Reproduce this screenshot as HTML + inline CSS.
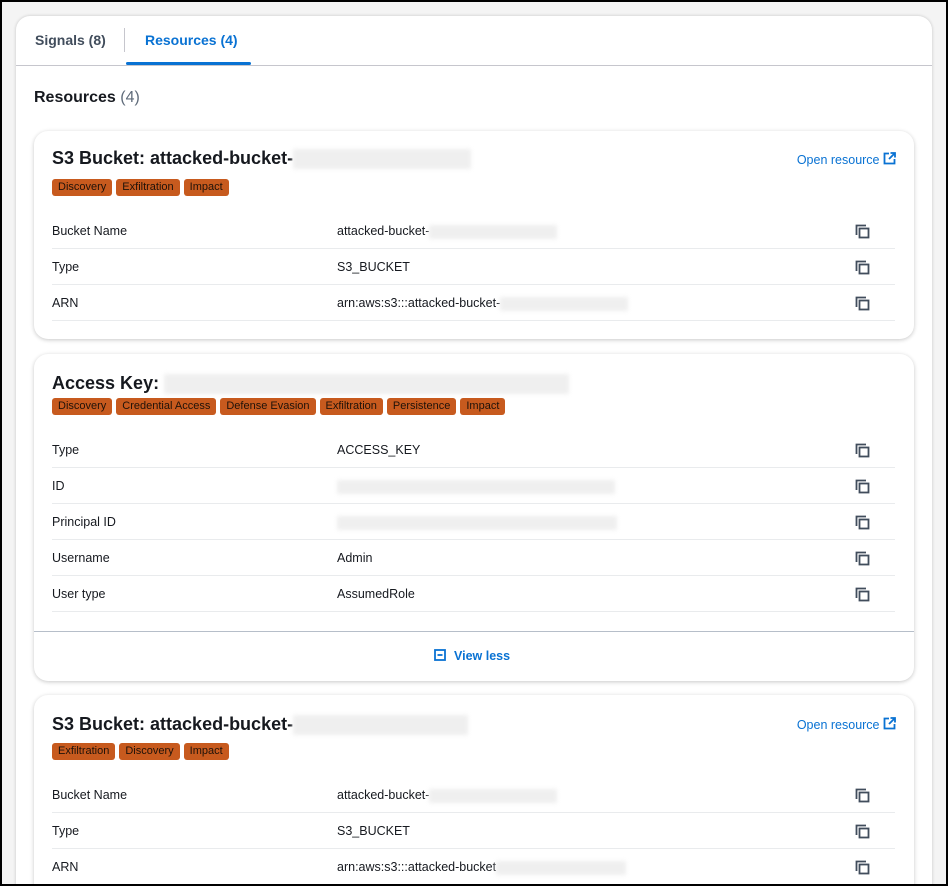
<!DOCTYPE html>
<html><head><meta charset="utf-8"><style>
*{box-sizing:border-box;margin:0;padding:0}
html,body{width:948px;height:886px;overflow:hidden;background:#f4f4f4;font-family:"Liberation Sans",sans-serif;color:#16191f;position:relative}
.frame{position:absolute;left:0;top:0;width:948px;height:886px;border:2px solid #000;}
.panel{position:absolute;left:16px;top:16px;width:916px;height:870px;overflow:hidden;background:#fff;border-radius:14px 14px 0 0;box-shadow:0 0 3px rgba(0,0,0,.2)}
.abs{position:absolute}
.tab{position:absolute;top:16px;font-size:14px;font-weight:bold}
.card{position:absolute;left:18px;width:880px;background:#fff;border-radius:14px;box-shadow:0 1px 4px rgba(0,0,0,.22)}
.title{position:absolute;left:18px;font-size:18px;font-weight:bold}
.tags{position:absolute;left:18px;display:flex;gap:4px}
.tag{background:#c75a1e;color:#1f1209;font-size:11px;height:17px;line-height:17px;padding:0 6px;border-radius:3px}
.row{position:absolute;left:18px;width:843px;height:36px;border-bottom:1px solid #e9ebed;font-size:12.5px}
.row .l{position:absolute;left:0;top:11px}
.row .v{position:absolute;left:285px;top:11px}
.row svg{position:absolute;left:803px;top:11px}
.blur{display:inline-block;background:#efefef;filter:blur(2px);vertical-align:middle;height:14px}
.open{position:absolute;right:18px;font-size:12.5px;color:#0972d3}
</style></head><body>
<div class="panel">
 <div class="tab" style="left:19px;color:#414d5c">Signals (8)</div>
 <div class="abs" style="left:108px;top:12px;width:1px;height:24px;background:#c6c6cd"></div>
 <div class="tab" style="left:129px;color:#0972d3">Resources (4)</div>
 <div class="abs" style="left:110px;top:46px;width:125px;height:3px;background:#0972d3;border-radius:2px"></div>
 <div class="abs" style="left:0;top:49px;width:916px;height:1px;background:#c6c6cd"></div>
 <div class="abs" style="left:18px;top:73px;font-size:16px;font-weight:bold">Resources <span style="font-weight:normal;color:#5f6b7a">(4)</span></div>

 <div class="card" style="top:115px;height:208px">
  <div class="title" style="top:17px">S3 Bucket: attacked-bucket-<span class="blur" style="width:178px;height:20px"></span></div>
  <div class="open" style="top:21px">Open resource <svg width="13" height="13" viewBox="0 0 13 13" style="vertical-align:-1px"><path d="M6 1.5H1.5v10h10V7" fill="none" stroke="#0972d3" stroke-width="1.8"/><path d="M7.5 1h4.5v4.5M12 1L6 7" fill="none" stroke="#0972d3" stroke-width="1.8"/></svg></div>
  <div class="tags" style="top:48px"><span class="tag">Discovery</span><span class="tag">Exfiltration</span><span class="tag">Impact</span></div>
  <div class="row" style="top:82px"><span class="l">Bucket Name</span><span class="v">attacked-bucket-<span class="blur" style="width:128px"></span></span>CP</div>
  <div class="row" style="top:118px"><span class="l">Type</span><span class="v">S3_BUCKET</span>CP</div>
  <div class="row" style="top:154px"><span class="l">ARN</span><span class="v">arn:aws:s3:::attacked-bucket-<span class="blur" style="width:128px"></span></span>CP</div>
 </div>

 <div class="card" style="top:338px;height:327px">
  <div class="title" style="top:19px">Access Key: <span class="blur" style="width:405px;height:20px"></span></div>
  <div class="tags" style="top:44px"><span class="tag">Discovery</span><span class="tag">Credential Access</span><span class="tag">Defense Evasion</span><span class="tag">Exfiltration</span><span class="tag">Persistence</span><span class="tag">Impact</span></div>
  <div class="row" style="top:78px"><span class="l">Type</span><span class="v">ACCESS_KEY</span>CP</div>
  <div class="row" style="top:114px"><span class="l">ID</span><span class="v"><span class="blur" style="width:278px"></span></span>CP</div>
  <div class="row" style="top:150px"><span class="l">Principal ID</span><span class="v"><span class="blur" style="width:280px"></span></span>CP</div>
  <div class="row" style="top:186px"><span class="l">Username</span><span class="v">Admin</span>CP</div>
  <div class="row" style="top:222px"><span class="l">User type</span><span class="v">AssumedRole</span>CP</div>
  <div class="abs" style="left:0;top:277px;width:880px;height:1px;background:#b6bec9"></div>
  <div class="abs" style="left:400px;top:295px;font-size:12.5px;color:#0972d3;font-weight:bold"><svg width="12" height="12" viewBox="0 0 12 12" style="vertical-align:-1px;margin-right:8px"><rect x="1" y="1" width="10" height="10" fill="none" stroke="#0972d3" stroke-width="1.8"/><path d="M3.5 6h5" stroke="#0972d3" stroke-width="1.8"/></svg>View less</div>
 </div>

 <div class="card" style="top:679px;height:220px">
  <div class="title" style="top:19px">S3 Bucket: attacked-bucket-<span class="blur" style="width:175px;height:20px"></span></div>
  <div class="open" style="top:22px">Open resource <svg width="13" height="13" viewBox="0 0 13 13" style="vertical-align:-1px"><path d="M6 1.5H1.5v10h10V7" fill="none" stroke="#0972d3" stroke-width="1.8"/><path d="M7.5 1h4.5v4.5M12 1L6 7" fill="none" stroke="#0972d3" stroke-width="1.8"/></svg></div>
  <div class="tags" style="top:48px"><span class="tag">Exfiltration</span><span class="tag">Discovery</span><span class="tag">Impact</span></div>
  <div class="row" style="top:82px"><span class="l">Bucket Name</span><span class="v">attacked-bucket-<span class="blur" style="width:128px"></span></span>CP</div>
  <div class="row" style="top:118px"><span class="l">Type</span><span class="v">S3_BUCKET</span>CP</div>
  <div class="row" style="top:154px"><span class="l">ARN</span><span class="v">arn:aws:s3:::attacked-bucket<span class="blur" style="width:130px"></span></span>CP</div>
 </div>
</div>
<div class="frame"></div>
<script>
document.querySelectorAll('.row').forEach(r=>{
 r.innerHTML=r.innerHTML.replace(/CP$/,'<svg width="15" height="15" viewBox="0 0 15 15"><path d="M1.5 11V1.5H11" fill="none" stroke="#414d5c" stroke-width="1.8"/><rect x="4.5" y="4.5" width="9" height="9" fill="none" stroke="#414d5c" stroke-width="1.8"/></svg>');
});
</script>
</body></html>
